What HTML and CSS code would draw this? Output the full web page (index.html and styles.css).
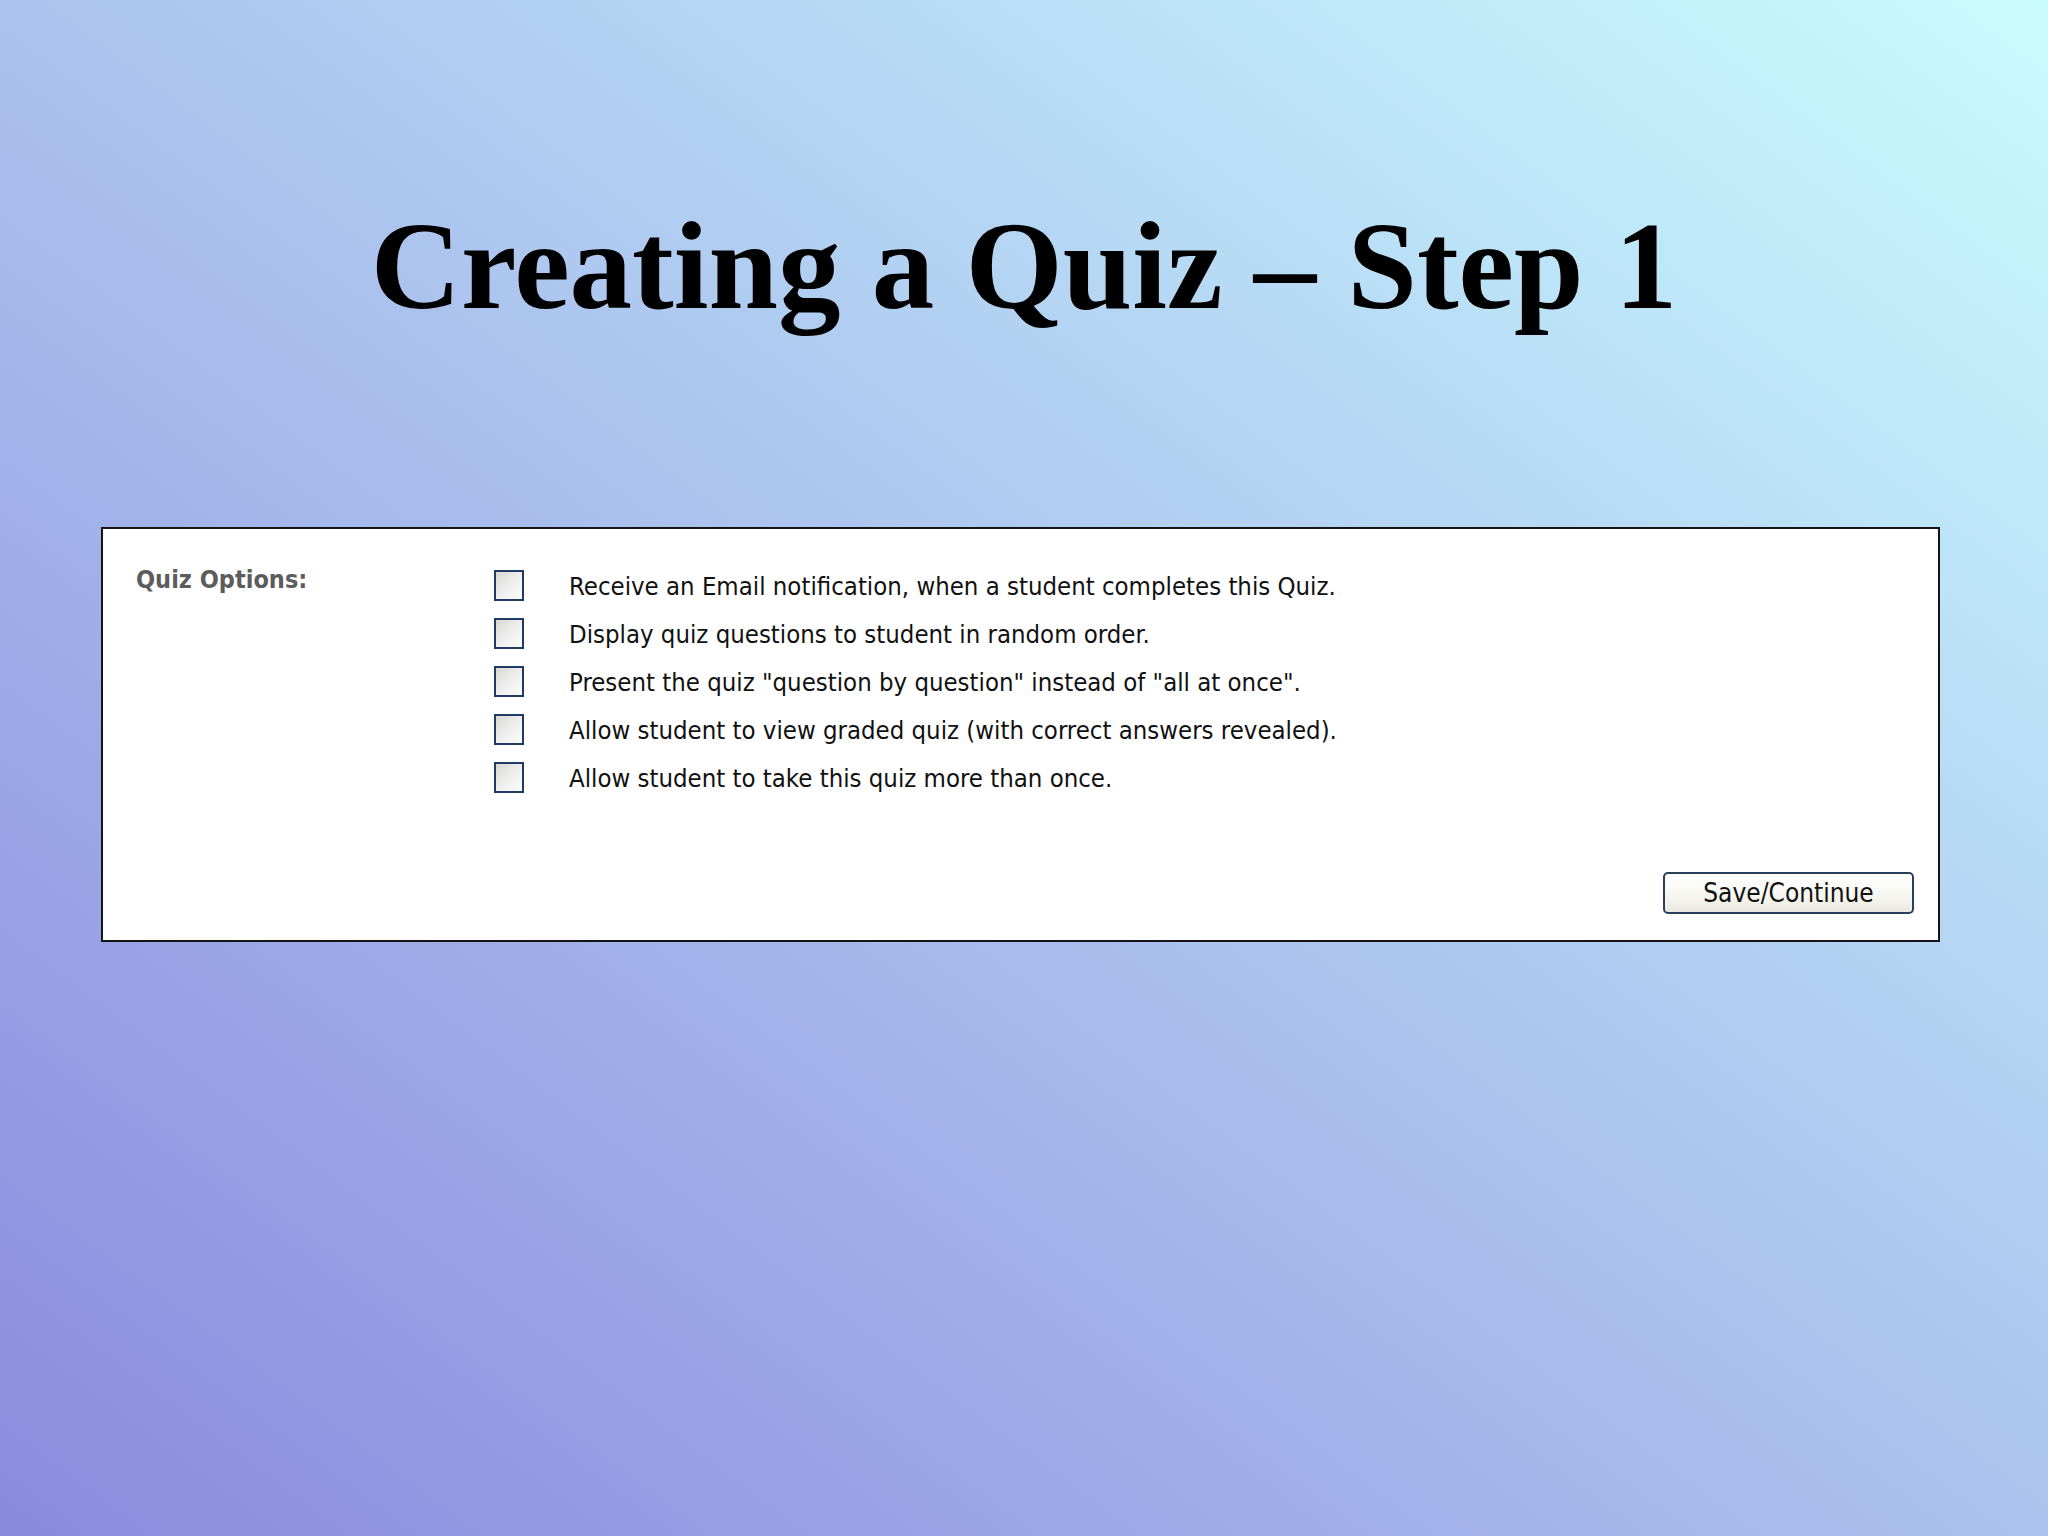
FILE: index.html
```html
<!DOCTYPE html>
<html lang="en">
<head>
    <meta charset="UTF-8">
    <title>Creating a Quiz - Step 1</title>
    <link rel="stylesheet" href="styles.css">
</head>
<body>
<div class="slide">
    <h1 class="title">Creating a Quiz – Step 1</h1>
    <div class="panel">
        <div class="options">
            <div class="label">Quiz Options:</div>
            <ul class="choices">
                <li class="choice"><span class="box"></span><span class="text">Receive an Email notification, when a student completes this Quiz.</span></li>
                <li class="choice"><span class="box"></span><span class="text">Display quiz questions to student in random order.</span></li>
                <li class="choice"><span class="box"></span><span class="text">Present the quiz "question by question" instead of "all at once".</span></li>
                <li class="choice"><span class="box"></span><span class="text">Allow student to view graded quiz (with correct answers revealed).</span></li>
                <li class="choice"><span class="box"></span><span class="text">Allow student to take this quiz more than once.</span></li>
            </ul>
        </div>
        <div class="actions">
            <button class="btn" type="button">Save/Continue</button>
        </div>
    </div>
</div>
</body>
</html>
```

FILE: styles.css
```css
*{
    margin: 0;
    padding: 0;
    list-style: none;
    box-sizing: border-box;
}
html, body{
    width: 2048px;
    height: 1536px;
}
.slide{
    width: 2048px;
    height: 1536px;
    padding-top: 203px;
    background: linear-gradient(to top right, #8a8ade 0%, #abc2ee 50%, #c9fcfe 100%);
}
.title{
    font-family: "Liberation Serif", "Times New Roman", serif;
    font-weight: bold;
    font-size: 125px;
    line-height: 126px;
    text-align: center;
    color: #000000;
}
.panel{
    width: 1839px;
    height: 415px;
    margin: 198px 0 0 101px;
    border: 2px solid #141414;
    background: #FFFFFF;
    padding: 41px 24px 0 33px;
    display: flex;
    flex-direction: column;
    font-family: "DejaVu Sans Condensed", "DejaVu Sans", Tahoma, sans-serif;
}
.options{
    display: grid;
    grid-template-columns: 358px 1fr;
}
.label{
    font-size: 25px;
    font-weight: bold;
    color: #5c5c5c;
    line-height: 26px;
    margin-top: -3px;
}
.choices{
    display: flex;
    flex-direction: column;
    gap: 17px;
}
.choice{
    display: flex;
    align-items: center;
    gap: 45px;
    height: 31px;
    font-size: 25.5px;
    color: #111111;
}
.box{
    width: 30px;
    height: 31px;
    border: 2px solid #1d3b66;
    background: linear-gradient(135deg, #d6d6d2 0%, #eeeeec 50%, #fdfdfd 100%);
}
.actions{
    display: flex;
    justify-content: flex-end;
    margin-top: auto;
    padding-bottom: 26px;
}
.btn{
    width: 251px;
    height: 42px;
    border: 2px solid #2a3f5c;
    border-radius: 5px;
    background: linear-gradient(#ffffff 0%, #f6f6f0 60%, #e9e8df 100%);
    font-family: "DejaVu Sans Condensed", "DejaVu Sans", Tahoma, sans-serif;
    font-size: 26px;
    color: #111111;
}
```
